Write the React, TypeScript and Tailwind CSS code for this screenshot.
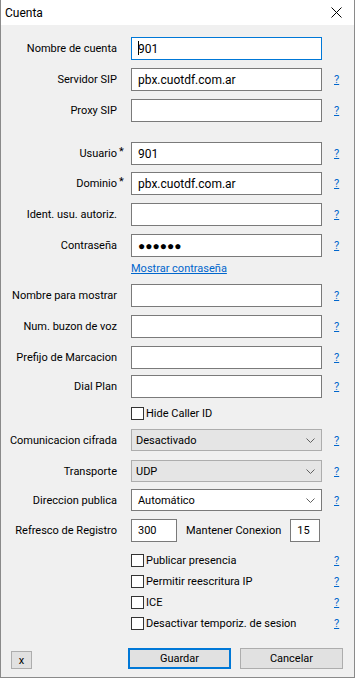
import React from "react";

function Help() {
  return <span className="ml-[12px] text-[#0066cc] underline leading-none">?</span>;
}

function Label({ text, star }: { text: string; star?: boolean }) {
  return (
    <div className="w-[130px] shrink-0 pr-[14px] text-right whitespace-nowrap">
      <span className="relative">
        {text}
        {star && <span className="absolute left-full top-[-1px] ml-[2px] text-[11px]">*</span>}
      </span>
    </div>
  );
}

function Field({
  label,
  value = "",
  star,
  help = true,
  focused,
  className = "",
}: {
  label: string;
  value?: string;
  star?: boolean;
  help?: boolean;
  focused?: boolean;
  className?: string;
}) {
  return (
    <div className={"flex items-center h-[23px] " + className}>
      <Label text={label} star={star} />
      <div
        className={
          "relative w-[191px] h-[23px] shrink-0 bg-white border flex items-center pl-[6px] text-[12px] " +
          (focused ? "border-[#0078d7]" : "border-[#7a7a7a]")
        }
      >
        {focused && <span className="absolute left-[6px] top-[3px] w-px h-[14px] bg-black" />}
        <span>{value}</span>
      </div>
      {help && <Help />}
    </div>
  );
}

function Chevron() {
  return (
    <svg width="9" height="6" viewBox="0 0 9 6" className="absolute right-[6px] top-[8px]">
      <path d="M0.5 0.5 L4.5 4.5 L8.5 0.5" fill="none" stroke="#606060" strokeWidth="1" />
    </svg>
  );
}

function Select({
  label,
  value,
  white,
  className = "",
}: {
  label: string;
  value: string;
  white?: boolean;
  className?: string;
}) {
  return (
    <div className={"flex items-center h-[22px] " + className}>
      <Label text={label} />
      <div
        className={
          "relative w-[191px] h-[22px] shrink-0 border flex items-center pl-[4px] " +
          (white ? "bg-white border-[#7a7a7a]" : "bg-[#e5e5e5] border-[#adadad]")
        }
      >
        <span className={white ? "pl-[2px]" : ""}>{value}</span>
        <Chevron />
      </div>
      <Help />
    </div>
  );
}

function Check({ label, help = true, className = "" }: { label: string; help?: boolean; className?: string }) {
  return (
    <div className={"flex items-center h-[13px] " + className}>
      <div className="w-[130px] shrink-0" />
      <div className="w-[13px] h-[13px] shrink-0 bg-white border border-[#333333]" />
      <span className="ml-[2px] w-[176px] shrink-0 whitespace-nowrap">{label}</span>
      {help && <Help />}
    </div>
  );
}

export default function App() {
  return (
    <div className="w-[356px] h-[679px] bg-white font-['Roboto',sans-serif] text-[11px] text-black leading-none">
      <div className="w-[355px] h-[678px] border-l border-r border-b border-[#8a8a8a] flex flex-col">
        <div className="h-[25px] bg-white flex items-center justify-between px-[4px] shrink-0">
          <span className="text-[12px]">Cuenta</span>
          <svg width="11" height="11" viewBox="0 0 11 11" className="mr-[8px]">
            <path d="M0.5 0.5 L10.5 10.5 M10.5 0.5 L0.5 10.5" stroke="#000" strokeWidth="1" />
          </svg>
        </div>
        <div className="flex-1 bg-[#f0f0f0] flex flex-col">
          <Field label="Nombre de cuenta" value="901" help={false} focused className="mt-[12px]" />
          <Field label="Servidor SIP" value="pbx.cuotdf.com.ar" className="mt-[8px]" />
          <Field label="Proxy SIP" className="mt-[8px]" />

          <Field label="Usuario" value="901" star className="mt-[20px]" />
          <Field label="Dominio" value="pbx.cuotdf.com.ar" star className="mt-[7px]" />
          <Field label="Ident. usu. autoriz." className="mt-[8px]" />
          <Field label="Contraseña" value="●●●●●●" className="mt-[8px]" />
          <div className="flex mt-[4px] h-[14px] items-center">
            <div className="w-[130px] shrink-0" />
            <span className="text-[#0066cc] underline">Mostrar contraseña</span>
          </div>

          <Field label="Nombre para mostrar" className="mt-[9px]" />
          <Field label="Num. buzon de voz" className="mt-[8px]" />
          <Field label="Prefijo de Marcacion" className="mt-[8px]" />
          <Field label="Dial Plan" className="mt-[6px]" />
          <Check label="Hide Caller ID" help={false} className="mt-[9px]" />

          <Select label="Comunicacion cifrada" value="Desactivado" className="mt-[9px]" />
          <Select label="Transporte" value="UDP" className="mt-[9px]" />
          <Select label="Direccion publica" value="Automático" white className="mt-[7px]" />

          <div className="flex items-center h-[23px] mt-[8px]">
            <Label text="Refresco de Registro" />
            <div className="w-[46px] h-[23px] bg-white border border-[#7a7a7a] flex items-center pl-[6px]">300</div>
            <span className="ml-[9px] whitespace-nowrap">Mantener Conexion</span>
            <div className="ml-[9px] w-[30px] h-[23px] bg-white border border-[#7a7a7a] flex items-center pl-[6px]">15</div>
          </div>

          <Check label="Publicar presencia" className="mt-[12px]" />
          <Check label="Permitir reescritura IP" className="mt-[8px]" />
          <Check label="ICE" className="mt-[8px]" />
          <Check label="Desactivar temporiz. de sesion" className="mt-[8px]" />

          <div className="flex items-end mt-[18px] h-[21px]">
            <button className="ml-[10px] w-[21px] h-[18px] bg-[#e1e1e1] border border-[#adadad] flex items-center justify-center">
              x
            </button>
            <button className="ml-[96px] w-[103px] h-[21px] bg-[#e1e1e1] border-2 border-[#0078d7] flex items-center justify-center">
              Guardar
            </button>
            <button className="ml-[9px] w-[103px] h-[21px] bg-[#e1e1e1] border border-[#adadad] flex items-center justify-center">
              Cancelar
            </button>
          </div>
        </div>
      </div>
    </div>
  );
}
